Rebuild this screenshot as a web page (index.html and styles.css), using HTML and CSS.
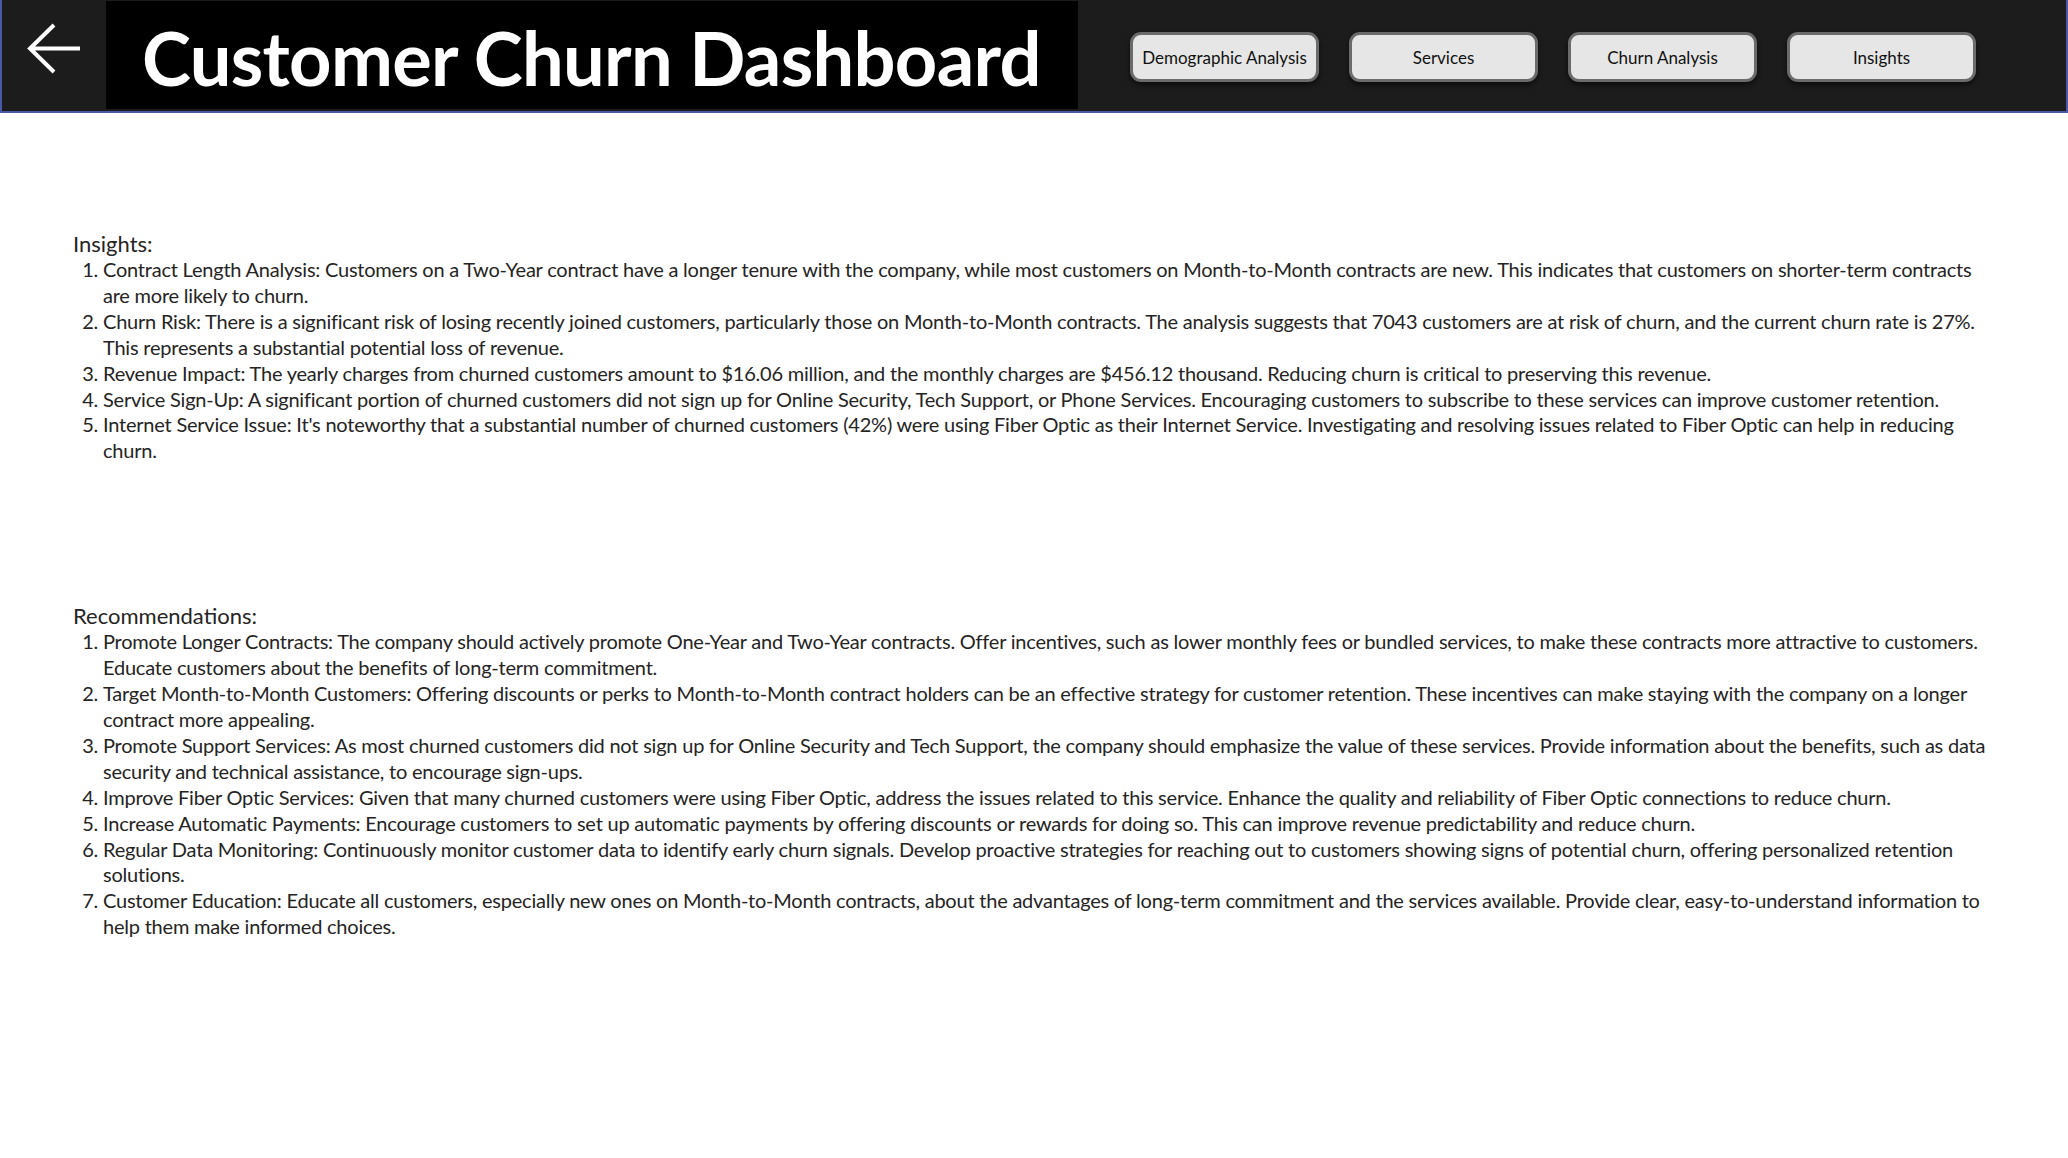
FILE: index.html
```html
<!DOCTYPE html>
<html lang="en">
<head>
<meta charset="utf-8">
<title>Customer Churn Dashboard</title>
<link rel="stylesheet" href="styles.css">
</head>
<body>
<header class="topbar">
  <div class="back">
    <svg class="back-icon" width="104" height="110" viewBox="0 0 104 110">
      <path d="M52 25 L28 48.5 L52 72 M28 48.5 H78" fill="none" stroke="#fff" stroke-width="4" stroke-linecap="butt" stroke-linejoin="miter"/>
    </svg>
  </div>
  <div class="title-box">
    <h1 class="title">Customer Churn Dashboard</h1>
  </div>
  <nav class="nav">
    <button class="nav-btn">Demographic Analysis</button>
    <button class="nav-btn">Services</button>
    <button class="nav-btn">Churn Analysis</button>
    <button class="nav-btn">Insights</button>
  </nav>
</header>
<main class="content">
  <section class="block insights">
    <h2 class="block-title">Insights:</h2>
    <ol class="items">
      <li>Contract Length Analysis: Customers on a Two-Year contract have a longer tenure with the company, while most customers on Month-to-Month contracts are new. This indicates that customers on shorter-term contracts are more likely to churn.</li>
      <li>Churn Risk: There is a significant risk of losing recently joined customers, particularly those on Month-to-Month contracts. The analysis suggests that 7043 customers are at risk of churn, and the current churn rate is 27%. This represents a substantial potential loss of revenue.</li>
      <li>Revenue Impact: The yearly charges from churned customers amount to $16.06 million, and the monthly charges are $456.12 thousand. Reducing churn is critical to preserving this revenue.</li>
      <li>Service Sign-Up: A significant portion of churned customers did not sign up for Online Security, Tech Support, or Phone Services. Encouraging customers to subscribe to these services can improve customer retention.</li>
      <li>Internet Service Issue: It's noteworthy that a substantial number of churned customers (42%) were using Fiber Optic as their Internet Service. Investigating and resolving issues related to Fiber Optic can help in reducing churn.</li>
    </ol>
  </section>
  <section class="block recommendations">
    <h2 class="block-title">Recommendations:</h2>
    <ol class="items">
      <li>Promote Longer Contracts: The company should actively promote One-Year and Two-Year contracts. Offer incentives, such as lower monthly fees or bundled services, to make these contracts more attractive to customers. Educate customers about the benefits of long-term commitment.</li>
      <li>Target Month-to-Month Customers: Offering discounts or perks to Month-to-Month contract holders can be an effective strategy for customer retention. These incentives can make staying with the company on a longer contract more appealing.</li>
      <li>Promote Support Services: As most churned customers did not sign up for Online Security and Tech Support, the company should emphasize the value of these services. Provide information about the benefits, such as data security and technical assistance, to encourage sign-ups.</li>
      <li>Improve Fiber Optic Services: Given that many churned customers were using Fiber Optic, address the issues related to this service. Enhance the quality and reliability of Fiber Optic connections to reduce churn.</li>
      <li>Increase Automatic Payments: Encourage customers to set up automatic payments by offering discounts or rewards for doing so. This can improve revenue predictability and reduce churn.</li>
      <li>Regular Data Monitoring: Continuously monitor customer data to identify early churn signals. Develop proactive strategies for reaching out to customers showing signs of potential churn, offering personalized retention solutions.</li>
      <li>Customer Education: Educate all customers, especially new ones on Month-to-Month contracts, about the advantages of long-term commitment and the services available. Provide clear, easy-to-understand information to help them make informed choices.</li>
    </ol>
  </section>
</main>
</body>
</html>
```

FILE: styles.css
```css
* { box-sizing: border-box; }

html, body {
  margin: 0;
  padding: 0;
  background: #ffffff;
}

body {
  width: 2068px;
  height: 1158px;
  overflow: hidden;
  font-family: Lato, "Liberation Sans", sans-serif;
  color: #252423;
}

.topbar {
  display: flex;
  align-items: flex-start;
  height: 113px;
  background: #1c1c1c;
  border-left: 2px solid #4a58a8;
  border-right: 2px solid #4a58a8;
  border-bottom: 2px solid #4a58a8;
}

.back {
  width: 104px;
  height: 110px;
  flex: none;
}

.back-icon { display: block; }

.title-box {
  flex: none;
  width: 972px;
  height: 108px;
  margin-top: 1px;
  background: #000;
  display: flex;
  align-items: center;
  padding-left: 36px;
}

.title {
  margin: 0;
  color: #fff;
  font-family: Lato, "Liberation Sans", sans-serif;
  font-weight: 700;
  font-size: 74px;
  letter-spacing: -0.7px;
  line-height: 1;
  padding-top: 5px;
  white-space: nowrap;
}

.nav {
  display: flex;
  gap: 30px;
  margin-left: 52px;
  margin-top: 32px;
}

.nav-btn {
  width: 189px;
  height: 50px;
  background: #e6e6e6;
  border: 3px solid #6b6b6b;
  border-radius: 11px;
  box-shadow: 0 3px 5px rgba(0, 0, 0, 0.55);
  font-family: Lato, "Liberation Sans", sans-serif;
  font-size: 17px;
  color: #111;
  padding: 0;
  cursor: pointer;
}

.content {
  padding-left: 73px;
  width: 2000px;
}

.block-title {
  margin: 0;
  font-weight: 400;
  font-size: 22px;
  line-height: 26px;
}

.insights { margin-top: 118px; }
.recommendations { margin-top: 139px; }

.items {
  margin: 0;
  padding-left: 30px;
  font-size: 20px;
  line-height: 25.9px;
  letter-spacing: -0.22px;
}
```
